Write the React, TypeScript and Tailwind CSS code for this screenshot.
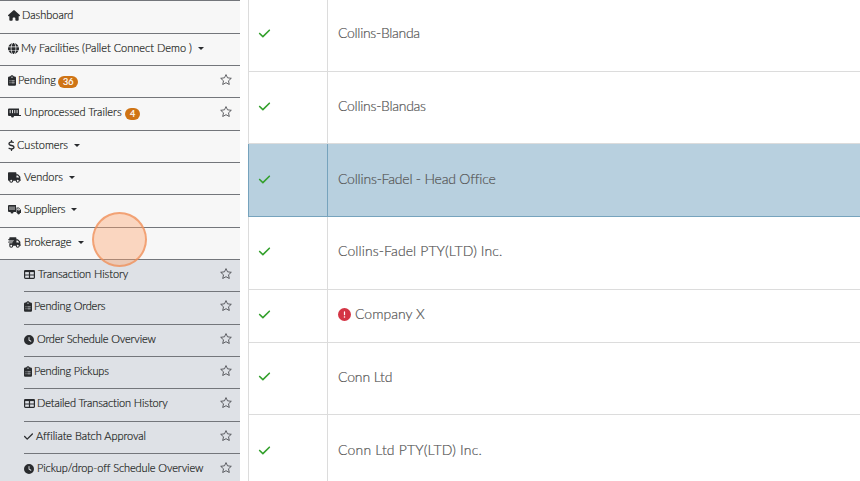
import type { ComponentType, ReactNode } from "react";
import {
  FaCheck,
  FaCircleExclamation,
  FaClipboardList,
  FaClock,
  FaDollarSign,
  FaGlobe,
  FaHouse,
  FaTruck,
  FaTruckFast,
} from "react-icons/fa6";

type IconProps = { className?: string };

type NavItem = {
  label: string;
  icon: ComponentType<IconProps>;
  /** Icon size plus the gap before the label. */
  iconClass: string;
  textClass: string;
  rowClass: string;
  badge?: string;
  caret?: boolean;
  star?: boolean;
};

const MAIN_ITEMS: NavItem[] = [
  { label: "Dashboard", icon: FaHouse, iconClass: "h-[11px] w-3 mr-[2px]", textClass: "w-[52px]", rowClass: "h-[33px]" },
  { label: "My Facilities (Pallet Connect Demo )", icon: FaGlobe, iconClass: "size-[11px] mr-[2px]", textClass: "w-[171px]", rowClass: "h-8", caret: true },
  { label: "Pending", icon: FaClipboardList, iconClass: "h-[11px] w-2 mr-[2px]", textClass: "w-[37px]", rowClass: "h-8", badge: "36", star: true },
  { label: "Unprocessed Trailers", icon: TrailerIcon, iconClass: "h-[11px] w-[13px] mr-[3px]", textClass: "w-[98px]", rowClass: "h-[33px]", badge: "4", star: true },
  { label: "Customers", icon: FaDollarSign, iconClass: "h-[11px] w-[7px] mr-[2px]", textClass: "w-[51px]", rowClass: "h-8", caret: true },
  { label: "Vendors", icon: FaTruck, iconClass: "h-[11px] w-[13px] mr-[3px]", textClass: "w-[39px]", rowClass: "h-8", caret: true },
  { label: "Suppliers", icon: LoadedTruckIcon, iconClass: "h-[11px] w-[13px] mr-[3px]", textClass: "w-[41px] tracking-[-0.2px]", rowClass: "h-[33px]", caret: true },
  { label: "Brokerage", icon: FaTruckFast, iconClass: "h-[11px] w-[13px] mr-[3px]", textClass: "w-[48px]", rowClass: "h-8", caret: true },
];

const SUB_ITEMS: NavItem[] = [
  { label: "Transaction History", icon: TableIcon, iconClass: "h-[9px] w-[11px] mr-[3px]", textClass: "tracking-[-0.06px]", rowClass: "h-8", star: true },
  { label: "Pending Orders", icon: FaClipboardList, iconClass: "h-[11px] w-2 mr-[2px]", textClass: "tracking-[-0.15px]", rowClass: "h-[33px]", star: true },
  { label: "Order Schedule Overview", icon: FaClock, iconClass: "size-[10px] mr-[3px]", textClass: "tracking-[-0.16px]", rowClass: "h-8", star: true },
  { label: "Pending Pickups", icon: FaClipboardList, iconClass: "h-[11px] w-2 mr-[2px]", textClass: "tracking-[-0.14px]", rowClass: "h-8", star: true },
  { label: "Detailed Transaction History", icon: TableIcon, iconClass: "h-[9px] w-[11px] mr-[2px]", textClass: "tracking-[-0.11px]", rowClass: "h-[33px]", star: true },
  { label: "Affiliate Batch Approval", icon: FaCheck, iconClass: "h-[11px] w-[9px] mr-[3px]", textClass: "tracking-[-0.06px]", rowClass: "h-8", star: true },
  { label: "Pickup/drop-off Schedule Overview", icon: FaClock, iconClass: "size-[10px] mr-[3px]", textClass: "tracking-[-0.1px]", rowClass: "h-[28px]", star: true },
];

const COMPANIES = [
  { name: "Collins-Blanda", row: "h-[72px]", cell: "pb-[5px]", text: "tracking-[-0.3px]" },
  { name: "Collins-Blandas", row: "h-[72px]", cell: "pb-[3px]", text: "tracking-[-0.28px]" },
  { name: "Collins-Fadel - Head Office", row: "h-[73px]", cell: "pb-[2px]", text: "tracking-[-0.21px]", selected: true },
  { name: "Collins-Fadel PTY(LTD) Inc.", row: "h-[73px]", cell: "pb-[4px]", text: "tracking-[0.1px]" },
  { name: "Company X", row: "h-[53px]", cell: "pb-[4px]", text: "tracking-[0px]", alert: true },
  { name: "Conn Ltd", row: "h-[72px]", cell: "pb-[4px]", text: "tracking-[-0.14px]" },
  { name: "Conn Ltd PTY(LTD) Inc.", row: "h-[72px]", cell: "pb-[1px]", text: "tracking-[0.18px]" },
];

export default function App() {
  return (
    <div className="relative flex h-[481px] w-[860px] overflow-hidden bg-white font-['Lato',sans-serif] font-light [-webkit-text-stroke:0.2px]">
      <aside className="flex w-60 shrink-0 flex-col bg-[#f7f7f7] text-[11px] text-[#1d1f22]">
        {MAIN_ITEMS.map((item) => (
          <NavRow key={item.label} item={item} indent="pl-2" />
        ))}
        <div className="flex-1 border-t border-[#73767b] bg-[#dee1e6] pl-6">
          <div className="-mt-px">
            {SUB_ITEMS.map((item) => (
              <NavRow key={item.label} item={item} indent="pl-0" />
            ))}
          </div>
        </div>
      </aside>

      <main className="ml-2 flex flex-1 flex-col border-l border-[#dcdcdc] text-sm text-[#565656]">
        {COMPANIES.map((c) => (
          <CompanyRow key={c.name} {...c} />
        ))}
      </main>

      {/* click marker */}
      <div className="absolute left-[92px] top-[212px] size-[55px] rounded-full border-2 border-[#ee8b54]/70 bg-[#ffa56e]/40" />
    </div>
  );
}

function NavRow({ item, indent }: { item: NavItem; indent: string }) {
  const Icon = item.icon;
  return (
    <div className={`flex shrink-0 items-start border-t border-[#73767b] pr-[8px] ${indent} ${item.rowClass}`}>
      <div className="flex h-[29px] flex-1 items-center">
        <Icon className={`shrink-0 text-[#292b2e] ${item.iconClass}`} />
        <Label className={item.textClass}>{item.label}</Label>
        {item.badge ? (
          <span className="ml-[3px] mt-[3px] flex h-3 items-center rounded-full bg-[#cf7415] px-[5px] text-[9px] font-normal text-white">
            {item.badge}
          </span>
        ) : null}
        {item.caret ? (
          <span className="ml-[6px] border-x-[3px] border-t-[3px] border-x-transparent border-t-[#292b2e]" />
        ) : null}
      </div>
      {item.star ? <ThinStar className="mt-[8px] h-[11px] w-3 text-[#3c3e42]" /> : null}
    </div>
  );
}

function Label({ className, children }: { className: string; children: ReactNode }) {
  return <span className={`shrink-0 whitespace-nowrap ${className}`}>{children}</span>;
}

function CompanyRow({
  name,
  row,
  cell,
  text,
  selected,
  alert,
}: {
  name: string;
  row: string;
  cell: string;
  text: string;
  selected?: boolean;
  alert?: boolean;
}) {
  const tone = selected
    ? "-ml-px border-l border-[#76a3bd] bg-[#b8d0df]"
    : "border-[#dcdcdc]";
  return (
    <div className={`flex shrink-0 items-stretch border-b ${tone} ${row}`}>
      <div className={`flex w-[78px] items-center pl-[9px] ${cell}`}>
        <FaCheck className="size-[13px] text-[#33a02c]" />
      </div>
      <div className={`flex flex-1 items-center border-l pl-[10px] ${cell} ${selected ? "border-[#76a3bd]" : "border-[#dcdcdc]"}`}>
        {alert ? <FaCircleExclamation className="mr-1 size-[13px] text-[#d43545]" /> : null}
        <span className={`whitespace-nowrap ${text}`}>{name}</span>
      </div>
    </div>
  );
}

function ThinStar({ className }: IconProps) {
  return (
    <svg viewBox="0 0 12 11" className={className} fill="none" stroke="currentColor" strokeWidth=".8" strokeLinejoin="round">
      <path d="M6 .6 7.500 3.800 11.300 4.300 8.500 6.800 9.300 10.500 6 8.700 2.700 10.500 3.500 6.800 .7 4.300 4.500 3.800Z" />
    </svg>
  );
}

function TableIcon({ className }: IconProps) {
  return (
    <svg viewBox="0 0 11 9" className={className} fill="none" stroke="currentColor">
      <rect x=".6" y=".6" width="9.800" height="7.800" rx=".8" strokeWidth="1.200" />
      <path d="M.6 1.300h9.800" strokeWidth="1.600" />
      <path d="M5.500 1v7.500M.6 5h9.800" strokeWidth="1.200" />
    </svg>
  );
}

function TrailerIcon({ className }: IconProps) {
  return (
    <svg viewBox="0 0 13 11" className={className} fill="currentColor">
      <path d="M1 1.500h10v6.500h2v1H6a1.500 1.500 0 0 1-3 0H1a1 1 0 0 1-1-1V2.500a1 1 0 0 1 1-1Z" />
      <path d="M2.200 3v3.200M4.500 3v3.200M6.800 3v3.200M9.100 3v3.200" stroke="#f7f7f7" strokeWidth=".9" />
    </svg>
  );
}

function LoadedTruckIcon({ className }: IconProps) {
  return (
    <svg viewBox="0 0 13 11" className={className} fill="currentColor">
      <path d="M1 1h7v7H5.500a1.500 1.500 0 0 1-3 0H1a1 1 0 0 1-1-1V2a1 1 0 0 1 1-1Z" />
      <path d="M8.500 3.500h2.300L13 6v3h-1a1.400 1.400 0 0 1-2.800 0h-.7Z" />
      <path d="M2 2.500v3.500M4 2.500v3.500M6 2.500v3.500M9.700 4.700h1l1 1.300h-2Z" stroke="#f7f7f7" strokeWidth=".8" />
    </svg>
  );
}
